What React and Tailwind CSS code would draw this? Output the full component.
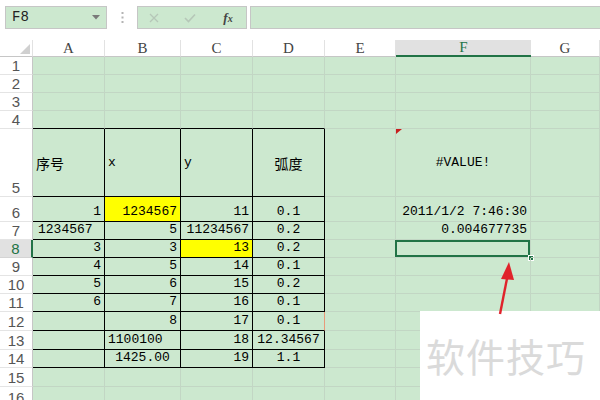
import React from "react";

const cols = [
  { key: "A", w: 72 },
  { key: "B", w: 76 },
  { key: "C", w: 72 },
  { key: "D", w: 72 },
  { key: "E", w: 71 },
  { key: "F", w: 135 },
  { key: "G", w: 69 },
];

const heights = [18, 18, 18, 18, 68, 25, 18, 18, 18, 18, 18, 19, 19, 18, 19, 20];

// r = right, l = left, c = center
const data = {
  5: { A: { t: "序号", a: "l", cjk: true }, B: { t: "x", a: "l" }, C: { t: "y", a: "l" }, D: { t: "弧度", a: "c", cjk: true }, F: { t: "#VALUE!", a: "c" } },
  6: { A: { t: "1" }, B: { t: "1234567", y: true }, C: { t: "11" }, D: { t: "0.1", a: "c" }, F: { t: "2011/1/2 7:46:30" } },
  7: { A: { t: "1234567", a: "p" }, B: { t: "5" }, C: { t: "11234567" }, D: { t: "0.2", a: "c" }, F: { t: "0.004677735" } },
  8: { A: { t: "3" }, B: { t: "3" }, C: { t: "13", y: true }, D: { t: "0.2", a: "c" } },
  9: { A: { t: "4" }, B: { t: "5" }, C: { t: "14" }, D: { t: "0.1", a: "c" } },
  10: { A: { t: "5" }, B: { t: "6" }, C: { t: "15" }, D: { t: "0.2", a: "c" } },
  11: { A: { t: "6" }, B: { t: "7" }, C: { t: "16" }, D: { t: "0.1", a: "c" } },
  12: { B: { t: "8" }, C: { t: "17" }, D: { t: "0.1", a: "c" } },
  13: { B: { t: "1100100", a: "l" }, C: { t: "18" }, D: { t: "12.34567", a: "c" } },
  14: { B: { t: "1425.00", a: "c" }, C: { t: "19" }, D: { t: "1.1", a: "c" } },
};

const inTable = (r, c) => r >= 5 && r <= 14 && ["A", "B", "C", "D"].includes(c);

const alignCls = {
  r: "justify-end pr-[3px]",
  l: "justify-start pl-[3px]",
  c: "justify-center",
  p: "justify-start pl-[5px]",
};

function Cell({ r, c }) {
  const d = data[r]?.[c];
  const table = inTable(r, c);
  const topOfTable = r === 4 && ["A", "B", "C", "D"].includes(c);
  let br = "border-r-[#c2d6c4]";
  let bb = "border-b-[#c2d6c4]";
  if (table) {
    br = r === 12 && c === "D" ? "border-r-[#e89a7a]" : "border-r-black";
    bb = "border-b-black";
  }
  if (topOfTable) bb = "border-b-black";
  const selected = r === 8 && c === "F";
  return (
    <div
      className={`relative flex border-r border-b ${br} ${bb} ${d?.y ? "bg-[#ffff00]" : ""} ${
        r === 5 ? "items-center" : "items-end pb-[1px]"
      } ${alignCls[d?.a || "r"]} whitespace-nowrap`}
    >
      {d && (
        <span
          className={
            d.cjk
              ? "text-[14px] leading-[18px] text-black font-['Noto_Sans_CJK_SC',sans-serif]"
              : "text-[13px] leading-[16px] text-black font-['Liberation_Mono',monospace]"
          }
        >
          {d.t}
        </span>
      )}
      {r === 5 && c === "F" && (
        <svg className="absolute left-0 top-0" width="7" height="6" viewBox="0 0 7 6">
          <polygon points="0,0 6,0 0,5" fill="#c81e1e" />
        </svg>
      )}
      {selected && (
        <>
          <div className="absolute -left-[1px] top-0 right-0 bottom-0 border-2 border-[#217346]" />
          <div className="absolute -right-[4px] -bottom-[4px] w-[6px] h-[6px] bg-[#217346] border border-white" />
        </>
      )}
    </div>
  );
}

export default function App() {
  const rowNums = heights.map((_, i) => i + 1);
  return (
    <div className="w-[600px] h-[400px] overflow-hidden bg-white relative font-['Liberation_Sans',sans-serif]">
      {/* formula bar */}
      <div className="h-[40px] flex items-start pt-[6px] pl-[5px]">
        <div className="w-[102px] h-[23px] border border-[#c6c6c6] bg-[#cce8cf] flex items-center justify-between pl-[6px] pr-[6px]">
          <span className="text-[14px] text-[#222] font-['Liberation_Mono',monospace]">F8</span>
          <svg width="8" height="5" viewBox="0 0 8 5">
            <polygon points="0,0 8,0 4,4.5" fill="#7a7a7a" />
          </svg>
        </div>
        <div className="w-[30px] h-[23px] flex items-center justify-center">
          <svg width="3" height="11" viewBox="0 0 3 11">
            <rect x="0.5" y="0" width="2" height="2" fill="#b4b4b4" />
            <rect x="0.5" y="4.5" width="2" height="2" fill="#b4b4b4" />
            <rect x="0.5" y="9" width="2" height="2" fill="#b4b4b4" />
          </svg>
        </div>
        <div className="w-[110px] h-[23px] border border-[#c6c6c6] bg-[#cce8cf] flex items-center">
          <div className="w-[32px] flex justify-center">
            <svg width="10" height="10" viewBox="0 0 10 10">
              <path d="M1 1 L9 9 M9 1 L1 9" stroke="#b6c7b8" strokeWidth="1.3" />
            </svg>
          </div>
          <div className="w-[40px] flex justify-center">
            <svg width="12" height="10" viewBox="0 0 12 10">
              <path d="M1 5 L4.5 8.5 L11 1.5" stroke="#b6c7b8" strokeWidth="1.6" fill="none" />
            </svg>
          </div>
          <div className="w-[36px] flex justify-center">
            <span className="italic font-bold text-[13px] text-[#444] font-['Liberation_Serif',serif]">
              f<span className="text-[10px]">x</span>
            </span>
          </div>
        </div>
        <div className="ml-[3px] flex-1 h-[23px] border border-r-0 border-[#c6c6c6] bg-[#cce8cf]" />
      </div>

      {/* sheet */}
      <div
        className="grid bg-[#cce8cf]"
        style={{
          gridTemplateColumns: `33px ${cols.map((c) => c.w + "px").join(" ")}`,
          gridTemplateRows: `17px ${heights.map((h) => h + "px").join(" ")}`,
        }}
      >
        {/* column header */}
        <div className="relative bg-white border-b border-[#c6c6c6] border-r border-r-[#e2e2e2]">
          <svg className="absolute right-[2px] bottom-[2px]" width="10" height="10" viewBox="0 0 10 10">
            <polygon points="10,0 10,10 0,10" fill="#d0d0d0" />
          </svg>
        </div>
        {cols.map((c) =>
          c.key === "F" ? (
            <div
              key={c.key}
              className="bg-[#e1e1e1] border-b-2 border-b-[#217346] flex items-center justify-center text-[15px] text-[#217346] font-['Liberation_Serif',serif]"
            >
              {c.key}
            </div>
          ) : (
            <div
              key={c.key}
              className="bg-white border-b border-b-[#c6c6c6] border-r border-r-[#e2e2e2] flex items-center justify-center text-[15px] text-[#444] font-['Liberation_Serif',serif]"
            >
              {c.key}
            </div>
          )
        )}

        {rowNums.map((r) => (
          <React.Fragment key={r}>
            {r === 8 ? (
              <div className="bg-[#e1e1e1] border-r-2 border-r-[#217346] border-b border-b-[#d4d4d4] flex items-end justify-center text-[15px] leading-[17px] text-[#217346]">
                {r}
              </div>
            ) : (
              <div className="bg-white border-r border-r-[#c6c6c6] border-b border-b-[#e4e4e4] flex items-end justify-center text-[15px] leading-[17px] text-[#555]">
                {r}
              </div>
            )}
            {cols.map((c) => (
              <Cell key={c.key} r={r} c={c.key} />
            ))}
          </React.Fragment>
        ))}
      </div>

      {/* watermark */}
      <div className="absolute left-[420px] top-[311px] w-[180px] h-[89px] bg-white flex items-center pl-[6px]">
        <span className="text-[39px] leading-none text-[#dadada] font-['Noto_Sans_CJK_SC',sans-serif] tracking-[1px]">
          软件技巧
        </span>
      </div>

      {/* arrow */}
      <svg className="absolute left-[490px] top-[258px]" width="30" height="60" viewBox="0 0 30 60">
        <line x1="10" y1="56" x2="17.5" y2="18" stroke="#e0232b" strokeWidth="2.4" />
        <polygon points="19,4 11,21 24,22" fill="#e0232b" />
      </svg>
    </div>
  );
}
